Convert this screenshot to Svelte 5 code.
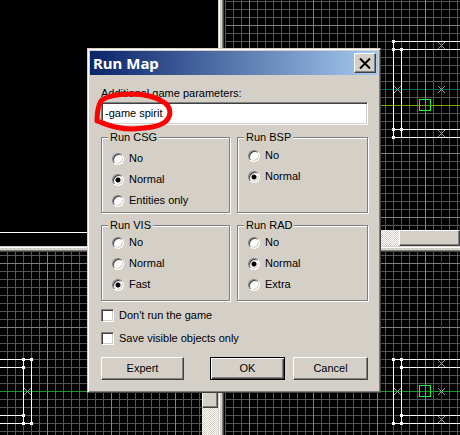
<script>
  let params = $state('-game spirit');
  let picked = $state({ csg: 'Normal', bsp: 'Normal', vis: 'Fast', rad: 'Normal' });
  let noRun = $state(false);
  let visibleOnly = $state(false);

  const groups = [
    { key: 'csg', title: 'Run CSG', options: ['No', 'Normal', 'Entities only'] },
    { key: 'bsp', title: 'Run BSP', options: ['No', 'Normal'] },
    { key: 'vis', title: 'Run VIS', options: ['No', 'Normal', 'Fast'] },
    { key: 'rad', title: 'Run RAD', options: ['No', 'Normal', 'Extra'] }
  ];

  // Each viewport is described in editor coordinates; x/y is its top-left corner.
  const views = [
    {
      id: 'top', x: 225, y: 0, gx: 249, gy: 25,
      axes: [
        ['#006060', 'M225 89.5H2000M441.5 0V230'],
        ['#78a010', 'M225 105.5H2000M425.5 0V230']
      ],
      walls: 'M2000 41.5H393.5V137.5H2000M393.5 49.5H2000M401.5 49.5V129.5M393.5 129.5H2000M401.5 129.5V137.5',
      handles: [[393, 41], [393, 49], [401, 49], [393, 129], [401, 129], [393, 137]],
      marks: [[441, 45], [397, 89], [441, 89], [441, 133]],
      player: [425, 105]
    },
    {
      id: 'front', x: 0, y: 252, gx: 47, gy: 263,
      axes: [['#209828', 'M0 391.5H202']],
      walls: 'M0 359.5H31.5V423.5H0M0 367.5H23.5M23.5 359.5V423.5M0 415.5H23.5',
      handles: [[23, 359], [31, 359], [23, 367], [23, 415], [23, 423], [31, 423]],
      marks: [[27, 391]],
      player: null
    },
    {
      id: 'side', x: 225, y: 252, gx: 249, gy: 263,
      axes: [
        ['#209828', 'M225 391.5H2000'],
        ['#006060', 'M441.5 252V2000'],
        ['#78a010', 'M425.5 252V2000']
      ],
      walls: 'M2000 359.5H393.5V423.5H2000M401.5 359.5V423.5M401.5 367.5H2000M401.5 415.5H2000',
      handles: [[393, 359], [401, 359], [401, 367], [401, 415], [393, 423], [401, 423]],
      marks: [[441, 363], [397, 391], [441, 391], [441, 419]],
      player: [425, 391]
    }
  ];
</script>

{#snippet viewport(v)}
  <svg class="view" aria-hidden="true">
    <defs>
      <pattern id="grid-{v.id}" x={v.gx} y={v.gy} width="64" height="64" patternUnits="userSpaceOnUse">
        <path
          d="M8.5 0V64M16.5 0V64M24.5 0V64M32.5 0V64M40.5 0V64M48.5 0V64M56.5 0V64M0 8.5H64M0 16.5H64M0 24.5H64M0 32.5H64M0 40.5H64M0 48.5H64M0 56.5H64"
          stroke="#555" />
        <path d="M.5 0V64M0 .5H64" stroke="#808080" />
      </pattern>
    </defs>
    <g transform="translate({-v.x} {-v.y})" fill="none" shape-rendering="crispEdges">
      <rect x={v.x} y={v.y} width="3000" height="3000" fill="url(#grid-{v.id})" />
      {#each v.axes as [color, d]}
        <path {d} stroke={color} />
      {/each}
      <path d={v.walls} stroke="#fff" />
      {#each v.handles as [x, y]}
        <rect x={x - 1} y={y - 1} width="3" height="3" fill="#fff" />
      {/each}
      {#each v.marks as [x, y]}
        <path d="M{x - 3} {y - 3}l7 7m0-7l-7 7" stroke="#999" shape-rendering="auto" />
      {/each}
      {#if v.player}
        <rect x={v.player[0] - 5.5} y={v.player[1] - 5.5} width="11" height="11" stroke="#20f040" />
      {/if}
    </g>
  </svg>
{/snippet}

<main class="editor">
  <div class="column left">
    <section class="pane camera"></section>
    <div class="split-h"></div>
    <section class="pane row">
      {@render viewport(views[1])}
      <div class="scroll vertical"><div class="thumb"></div></div>
    </section>
  </div>
  <div class="split-v"></div>
  <div class="column right">
    <section class="pane stack">
      {@render viewport(views[0])}
      <div class="scroll horizontal"><div class="thumb"></div></div>
    </section>
    <div class="split-h"></div>
    <section class="pane row">{@render viewport(views[2])}</section>
  </div>

  <form class="dialog" aria-labelledby="dialog-title" onsubmit={(e) => e.preventDefault()}>
    <header>
      <h1 id="dialog-title">Run Map</h1>
      <button type="button" class="close" aria-label="Close">
        <svg width="12" height="11" viewBox="0 0 12 11" aria-hidden="true">
          <path d="M1 .5L11 10.5M11 .5L1 10.5" stroke="#000" stroke-width="2" />
        </svg>
      </button>
    </header>

    <div class="body">
      <label class="caption" for="params">Additional game parameters:</label>
      <input id="params" class="text" type="text" bind:value={params} />

      <div class="groups">
        {#each groups as g}
          <fieldset class={g.key}>
            <legend>{g.title}</legend>
            {#each g.options as option}
              <label class="choice">
                <input type="radio" name={g.key} value={option} bind:group={picked[g.key]} />
                {option}
              </label>
            {/each}
          </fieldset>
        {/each}
      </div>

      <div class="checks">
        <label><input type="checkbox" bind:checked={noRun} />Don't run the game</label>
        <label><input type="checkbox" bind:checked={visibleOnly} />Save visible objects only</label>
      </div>

      <div class="buttons">
        <button type="button" class="push expert">Expert</button>
        <button type="submit" class="push default">OK</button>
        <button type="button" class="push">Cancel</button>
      </div>
    </div>

    <svg class="marker" width="84" height="48" viewBox="92 87 84 48" aria-hidden="true">
      <path
        d="M102 100C109 95 118 94 131 94C147 94 158 98 165 103C172 109 171 117 165 122C158 127 148 128 133 129C117 129 109 125 97 121C97 115 98 106 101 101"
        fill="none" stroke="#fe0000" stroke-width="5" stroke-linecap="round" stroke-linejoin="round" />
    </svg>
  </form>
</main>

<style>
  :global(body) {
    background: #000;
  }

  .editor {
    --face: #d4d0c8;
    position: relative;
    display: flex;
    height: 100vh;
    min-height: 400px;
    overflow: hidden;
    background: #000;
    color: #000;
    font: 11px/13px "Liberation Sans", Arial, sans-serif;
  }

  .column {
    display: flex;
    flex-direction: column;
    min-width: 0;
  }

  .left {
    flex: 0 0 218px;
  }

  .right {
    flex: 1;
  }

  .pane {
    display: flex;
    min-height: 0;
    background: #000;
  }

  .camera,
  .stack {
    flex: 0 0 246px;
  }

  .camera::before {
    content: "";
    flex: 1;
    height: 232px;
    border-bottom: 1px solid #fff;
  }

  .stack {
    flex-direction: column;
  }

  .row {
    flex: 1;
  }

  .view {
    display: block;
    flex: 1 1 0;
    min-width: 0;
    min-height: 0;
  }

  .stack .view {
    width: 100%;
  }

  .split-h {
    flex: 0 0 6px;
    background: linear-gradient(var(--face) 1px, #fff 1px 2px, var(--face) 2px 4px, #808080 4px 5px, #404040 5px);
  }

  .split-v {
    flex: 0 0 7px;
    background: linear-gradient(90deg, var(--face) 1px, #fff 1px 2px, var(--face) 2px 4px, #808080 4px 5px, #404040 5px 6px, #000 6px);
  }

  .scroll {
    display: flex;
    background: repeating-conic-gradient(#fff 0 25%, var(--face) 0 50%) 0 0 / 2px 2px;
  }

  .vertical {
    flex: 0 0 16px;
    flex-direction: column;
  }

  .vertical .thumb {
    flex: 0 0 156px;
  }

  .horizontal {
    flex: 0 0 16px;
  }

  .horizontal .thumb {
    flex: 1;
    margin-left: 174px;
  }

  .thumb,
  .close,
  .push {
    box-sizing: border-box;
    background: var(--face);
    border: 1px solid;
    border-color: #fff #404040 #404040 #fff;
    box-shadow: inset -1px -1px #808080;
  }

  .dialog {
    position: absolute;
    top: 48px;
    left: 87px;
    right: 79px;
    padding: 2px;
    background: var(--face);
    border: 1px solid;
    border-color: var(--face) #404040 #404040 var(--face);
    box-shadow: inset 1px 1px #fff, inset -1px -1px #808080;
  }

  header {
    display: flex;
    align-items: center;
    justify-content: space-between;
    height: 24px;
    padding: 0 2px 0 3px;
    background: linear-gradient(90deg, #0a246a, #a6caf0);
  }

  h1 {
    margin: 0;
    color: #fff;
    font: bold 15px/24px "Noto Sans", "Open Sans", sans-serif;
  }

  .close {
    display: grid;
    place-items: center;
    width: 22px;
    height: 20px;
    padding: 0;
  }

  .body {
    padding: 12px 10px 10px 11px;
  }

  .caption {
    display: block;
    height: 15px;
  }

  .text {
    display: block;
    box-sizing: border-box;
    width: 100%;
    height: 23px;
    padding: 0 3px 2px;
    background: #fff;
    border: 1px solid;
    border-color: #808080 #fff #fff #808080;
    border-radius: 0;
    box-shadow: inset 1px 1px #404040, inset -1px -1px var(--face);
    color: #000;
    font: inherit;
    outline: 0;
  }

  .groups {
    display: grid;
    grid-template-columns: 129fr 131fr;
    gap: 6px 7px;
    margin-top: 6px;
  }

  fieldset {
    box-sizing: border-box;
    min-width: 0;
    min-height: 82px;
    margin: 0;
    padding: 0 10px;
    border: 1px solid #808080;
    box-shadow: 1px 1px #fff, inset 1px 1px #fff;
  }

  .csg {
    padding-top: 4px;
  }

  .bsp {
    padding-top: 1px;
  }

  legend {
    margin-left: -4px;
    padding: 0 2px;
    background: var(--face);
  }

  .choice {
    display: flex;
    align-items: center;
    gap: 5px;
    height: 21px;
  }

  .choice input {
    appearance: none;
    box-sizing: border-box;
    width: 12px;
    height: 12px;
    margin: 0;
    background: #fff;
    border: 1px solid;
    border-color: #808080 #fff #fff #808080;
    border-radius: 50%;
    box-shadow: inset 1px 1px #404040, inset -1px -1px var(--face);
  }

  .choice input:checked {
    background: radial-gradient(circle, #000 2px, #fff 3px);
  }

  .checks {
    margin-top: 3px;
  }

  .checks label {
    display: flex;
    align-items: center;
    gap: 5px;
    height: 23px;
  }

  .checks input {
    appearance: none;
    box-sizing: border-box;
    width: 13px;
    height: 13px;
    margin: 0;
    background: #fff;
    border: 1px solid;
    border-color: #808080 #fff #fff #808080;
    box-shadow: inset 1px 1px #404040, inset -1px -1px var(--face);
  }

  .checks input:checked {
    background: radial-gradient(circle, #000 3px, #fff 4px);
  }

  .buttons {
    display: flex;
    gap: 8px;
    margin-top: 7px;
  }

  .push {
    width: 75px;
    height: 23px;
    padding: 0;
    color: #000;
    font: inherit;
  }

  .expert {
    width: 83px;
    margin-right: auto;
  }

  .default {
    border-color: #000;
    box-shadow: inset 1px 1px #fff, inset -1px -1px #404040, inset -2px -2px #808080;
  }

  .marker {
    position: absolute;
    top: 38px;
    left: 4px;
    pointer-events: none;
  }
</style>
